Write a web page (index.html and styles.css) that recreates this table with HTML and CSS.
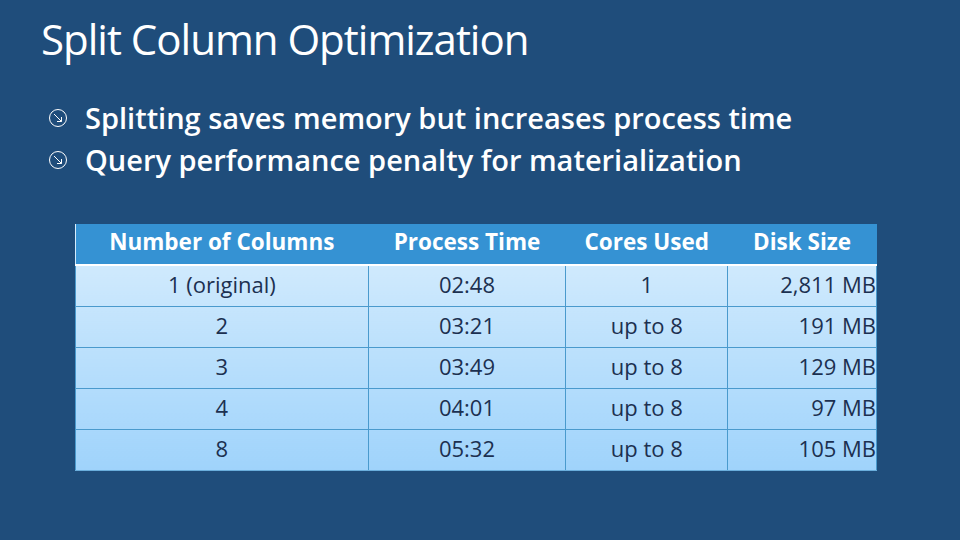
FILE: index.html
```html
<!DOCTYPE html>
<html>
<head>
<meta charset="utf-8">
<link rel="stylesheet" href="styles.css">
</head>
<body>
<div class="slide">
  <h1 class="title">Split Column Optimization</h1>
  <ul class="bullets">
    <li><svg class="icon" viewBox="0 0 20 20" width="20" height="20"><circle cx="10" cy="10" r="8.5" fill="none" stroke="#fff" stroke-width="1"/><path d="M6 6 L13.5 13.5 M13.5 9 L13.5 13.5 L9 13.5" fill="none" stroke="#fff" stroke-width="1"/></svg><span>Splitting saves memory but increases process time</span></li>
    <li><svg class="icon" viewBox="0 0 20 20" width="20" height="20"><circle cx="10" cy="10" r="8.5" fill="none" stroke="#fff" stroke-width="1"/><path d="M6 6 L13.5 13.5 M13.5 9 L13.5 13.5 L9 13.5" fill="none" stroke="#fff" stroke-width="1"/></svg><span>Query performance penalty for materialization</span></li>
  </ul>
  <table class="data">
    <thead>
      <tr><th class="c1">Number of Columns</th><th class="c2">Process Time</th><th class="c3">Cores Used</th><th class="c4">Disk Size</th></tr>
    </thead>
    <tbody>
      <tr><td>1 (original)</td><td>02:48</td><td>1</td><td class="num">2,811 MB</td></tr>
      <tr><td>2</td><td>03:21</td><td>up to 8</td><td class="num">191 MB</td></tr>
      <tr><td>3</td><td>03:49</td><td>up to 8</td><td class="num">129 MB</td></tr>
      <tr><td>4</td><td>04:01</td><td>up to 8</td><td class="num">97 MB</td></tr>
      <tr><td>8</td><td>05:32</td><td>up to 8</td><td class="num">105 MB</td></tr>
    </tbody>
  </table>
</div>
</body>
</html>
```
FILE: styles.css
```css
* { box-sizing: border-box; }
html, body { margin: 0; padding: 0; }
body {
  width: 960px;
  height: 540px;
  background: #1f4d7b;
  font-family: "Open Sans", "Noto Sans", sans-serif;
  color: #fff;
  overflow: hidden;
}
.slide {
  display: flex;
  flex-direction: column;
  padding: 12px 0 0 0;
}
.title {
  margin: 0 0 0 41px;
  font-size: 42px;
  font-weight: 400;
  letter-spacing: -1px;
  line-height: 54px;
}
.bullets {
  list-style: none;
  margin: 30px 0 0 48px;
  padding: 0;
}
.bullets li {
  display: flex;
  align-items: center;
  height: 42px;
  font-size: 29px;
  font-weight: 600;
  letter-spacing: 0;
}
.icon {
  flex: none;
  margin-right: 17px;
  margin-top: 2px;
}
.data {
  margin: 44px 0 0 75px;
  width: 802px;
  border-collapse: collapse;
  font-size: 22px;
  background: linear-gradient(to bottom, #d9eefd 0%, #9fd3fb 100%);
}
.data th {
  background: #3592d3;
  color: #fff;
  font-weight: 700;
  font-size: 22.5px;
  height: 41px;
  padding: 0 0 5px 0;
  text-align: center;
  border-bottom: 2px solid #ffffff;
}
.c1 { width: 293px; }
.c2 { width: 198px; }
.c3 { width: 162px; }
.c4 { width: 149px; }
.data td {
  height: 41px;
  padding: 0 0 4px 0;
  text-align: center;
  color: #1c3050;
  border: 1px solid #4a9acd;
}
.data td.num { text-align: right; padding-right: 0; }
.data tbody tr:last-child td { border-bottom: 1px solid #6aaedc; }
```
